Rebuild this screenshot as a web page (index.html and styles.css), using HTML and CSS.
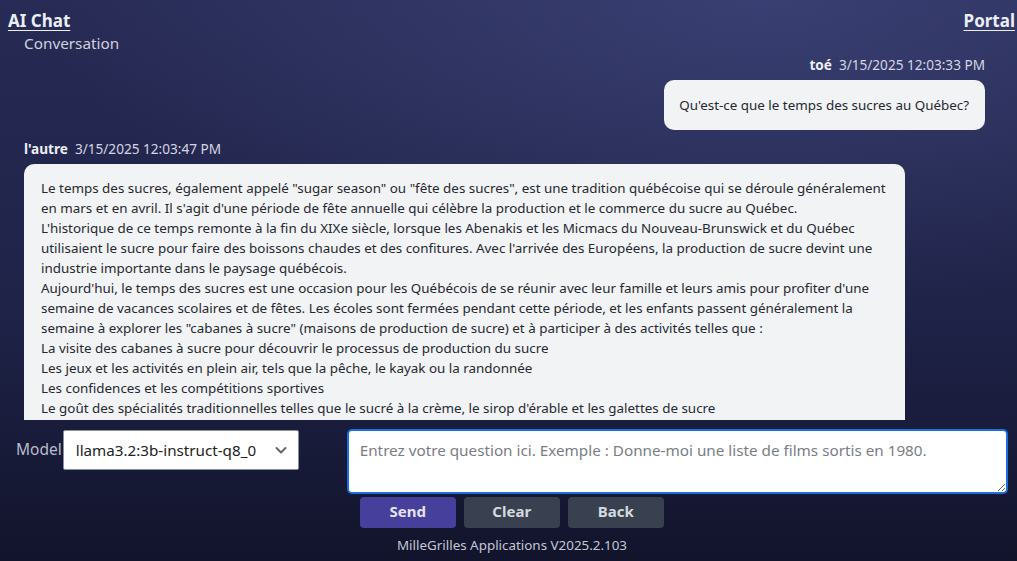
FILE: index.html
```html
<!DOCTYPE html>
<html lang="fr">
<head>
<meta charset="utf-8">
<title>AI Chat</title>
<link rel="stylesheet" href="styles.css">
</head>
<body>
<div class="page">
  <header class="topbar">
    <a class="nav-link" href="#">AI Chat</a>
    <a class="nav-link" href="#">Portal</a>
  </header>
  <h2 class="section-title">Conversation</h2>
  <main class="chat">
    <div class="msg msg-user">
      <div class="meta"><span class="author">toé</span><span class="date">3/15/2025 12:03:33 PM</span></div>
      <div class="bubble bubble-user">Qu'est-ce que le temps des sucres au Québec?</div>
    </div>
    <div class="msg msg-bot">
      <div class="meta"><span class="author">l'autre</span><span class="date">3/15/2025 12:03:47 PM</span></div>
      <div class="bubble bubble-bot">
        <p>Le temps des sucres, également appelé "sugar season" ou "fête des sucres", est une tradition québécoise qui se déroule généralement<br>en mars et en avril. Il s'agit d'une période de fête annuelle qui célèbre la production et le commerce du sucre au Québec.</p>
        <p>L'historique de ce temps remonte à la fin du XIXe siècle, lorsque les Abenakis et les Micmacs du Nouveau-Brunswick et du Québec<br>utilisaient le sucre pour faire des boissons chaudes et des confitures. Avec l'arrivée des Européens, la production de sucre devint une<br>industrie importante dans le paysage québécois.</p>
        <p>Aujourd'hui, le temps des sucres est une occasion pour les Québécois de se réunir avec leur famille et leurs amis pour profiter d'une<br>semaine de vacances scolaires et de fêtes. Les écoles sont fermées pendant cette période, et les enfants passent généralement la<br>semaine à explorer les "cabanes à sucre" (maisons de production de sucre) et à participer à des activités telles que :</p>
        <p>La visite des cabanes à sucre pour découvrir le processus de production du sucre</p>
        <p>Les jeux et les activités en plein air, tels que la pêche, le kayak ou la randonnée</p>
        <p>Les confidences et les compétitions sportives</p>
        <p>Le goût des spécialités traditionnelles telles que le sucré à la crème, le sirop d'érable et les galettes de sucre</p>
        <p>En résumé, le temps des sucres est une fête importante au Québec.</p>
      </div>
    </div>
  </main>
  <section class="composer">
    <div class="model-col">
      <label class="model-label">Model</label>
      <div class="select">
        <span>llama3.2:3b-instruct-q8_0</span>
        <svg class="chevron" width="14" height="14" viewBox="0 0 14 14"><path d="M2.5 5 L7 9.5 L11.5 5" fill="none" stroke="#666" stroke-width="2" stroke-linecap="round" stroke-linejoin="round"/></svg>
      </div>
    </div>
    <div class="input-col">
      <textarea class="question" placeholder="Entrez votre question ici. Exemple : Donne-moi une liste de films sortis en 1980."></textarea>
      <div class="buttons">
        <button class="btn btn-primary">Send</button>
        <button class="btn btn-secondary">Clear</button>
        <button class="btn btn-secondary">Back</button>
      </div>
    </div>
  </section>
  <footer class="footer">MilleGrilles Applications V2025.2.103</footer>
</div>
</body>
</html>
```
FILE: styles.css
```css
* { box-sizing: border-box; }
html, body { margin: 0; height: 100%; }
body {
  font-family: "Noto Sans", "Open Sans", sans-serif;
  color: #e6e7ef;
  background:
    radial-gradient(ellipse 70% 55% at 75% 0%, rgba(72,80,138,0.55), rgba(72,80,138,0) 100%),
    linear-gradient(180deg, #272b55 0%, #1f2348 55%, #12142c 100%);
  overflow: hidden;
}
.page { height: 561px; display: flex; flex-direction: column; }
.topbar {
  display: flex; justify-content: space-between;
  padding: 9px 2px 0 8px; height: 32px;
}
.nav-link {
  color: #eceef5; font-weight: 700; font-size: 17px; line-height: 24px;
  text-decoration: underline; text-underline-offset: 3px;
}
.section-title {
  margin: 0; padding-left: 24px;
  font-size: 15.3px; font-weight: 400; color: #cfd1dc; line-height: 22px;
}
.chat {
  height: 366px; overflow: hidden;
  padding: 2px 32px 0 24px;
}
.msg { display: flex; flex-direction: column; }
.msg-user { align-items: flex-end; }
.msg-bot { align-items: flex-start; }
.meta { font-size: 13.6px; line-height: 18px; color: #d4d6e2; }
.msg-user .meta { margin-bottom: 6px; }
.msg-bot .meta { margin-top: 10px; margin-bottom: 6px; }
.author { font-weight: 700; color: #eceef5; margin-right: 7px; }
.bubble {
  background: #f1f3f5; color: #262830; border-radius: 10px;
  font-size: 13.4px; line-height: 20px;
}
.bubble-user { padding: 15px 16px 15px 15px; }
.bubble-bot { padding: 14px 17px; width: 881px; }
.bubble-bot p { margin: 0; white-space: nowrap; }
.composer {
  display: flex; gap: 48px; padding: 9px 9px 0 16px;
}
.model-col { display: flex; align-items: flex-start; }
.model-label { font-size: 15.5px; color: #b9bccc; line-height: 20px; margin-top: 10px; }
.select {
  width: 236px; height: 40px; margin-top: 1px; margin-left: 1px;
  background: #fff; border: 1px solid #8a8f9c; border-radius: 2px;
  display: flex; align-items: center; justify-content: space-between;
  padding: 0 10px 0 12px; color: #222; font-size: 15.2px;
}
.input-col { flex: 1; display: flex; flex-direction: column; }
.question {
  display: block; width: 100%; height: 65px; min-height: 65px; resize: vertical;
  border: 2px solid #1d6fe0; border-radius: 5px; background: #fff;
  padding: 9px 11px; font: 15.25px "Noto Sans", sans-serif; color: #222;
}
.question::placeholder { color: #7a7d85; }
.buttons { display: flex; gap: 8px; padding-left: 13px; margin-top: 3px; }
.btn {
  width: 96px; height: 31px; border: 0; border-radius: 4px; padding: 0 0 3px;
  font: 700 15px/20px "Noto Sans", sans-serif;
}
.btn-primary { background: #463f9c; color: #e4e3f4; }
.btn-secondary { background: #394150; color: #d6d9df; }
.footer {
  text-align: center; font-size: 13.4px; color: #c4c7d2;
  margin-top: 8px; padding-left: 7px;
}
```
